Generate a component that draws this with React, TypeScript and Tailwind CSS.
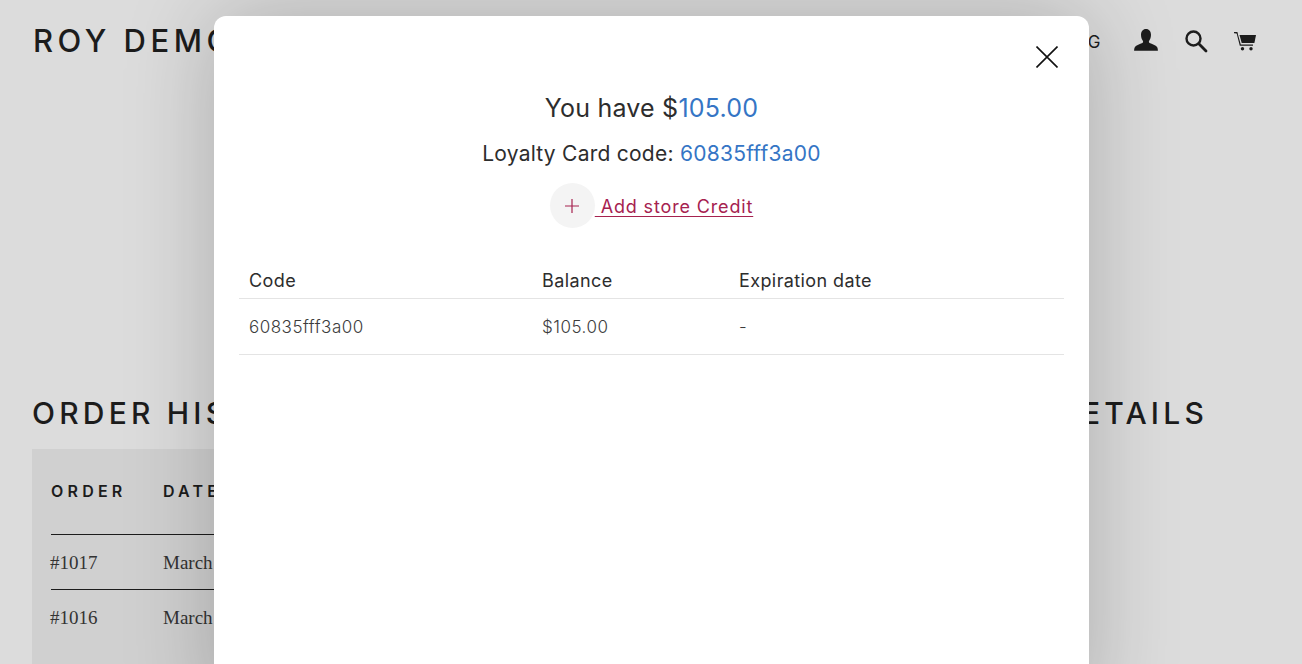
const sans = "font-['Inter','Noto_Sans',sans-serif]";

function UserIcon() {
  return (
    <svg width="26" height="26" viewBox="0 0 26 26" className="text-[#1c1c1c]" fill="currentColor">
      <path d="M13 1c3.200 0 5 2.600 5 5.800 0 2.400-.8 4.600-1.800 6-.5.8-.4 1.700.4 2.100 2.400 1.200 6.200 2 7.500 4.100.6 1 .8 2.300.8 3.800H1.100c0-1.500.2-2.800.8-3.800 1.300-2.100 5.100-2.900 7.500-4.100.8-.4.9-1.300.4-2.100-1-1.400-1.800-3.600-1.800-6C8 3.600 9.800 1 13 1z" />
    </svg>
  );
}

function SearchIcon() {
  return (
    <svg width="24" height="24" viewBox="0 0 24 24" fill="none" stroke="#1c1c1c">
      <circle cx="9.500" cy="9.500" r="7" strokeWidth="2.400" />
      <path d="M14.800 14.800L22 22" strokeWidth="2.800" strokeLinecap="round" />
    </svg>
  );
}

function CartIcon() {
  return (
    <svg width="24" height="22" viewBox="0 0 24 22" fill="#1c1c1c">
      <path d="M1 2h3.200l.6 1.500L3.800 3.400 1 3.200z" />
      <path d="M3.400 2.500l1 .1L7.800 14.500H20v1.200H6.800z" />
      <path d="M6.500 5h16.500l-1.600 8H8.700z" />
      <circle cx="9.500" cy="18.800" r="1.700" />
      <circle cx="18" cy="18.800" r="1.700" />
    </svg>
  );
}

function Page() {
  return (
    <div className="flex h-[664px] flex-col overflow-hidden bg-[#dcdcdc] text-[#1c1c1c]">
      <header className="flex h-[82px] items-start justify-between pl-[33px] pr-[45px]">
        <div className={`${sans} mt-[22px] text-[31px] leading-[38px] font-medium tracking-[4.500px] whitespace-nowrap`}>ROY DEMO STORE</div>
        <nav className="mt-[27px] flex items-center">
          <span className={`${sans} mr-[31px] mt-[3px] text-[17px] tracking-[1.500px]`}>CATALOG</span>
          <span className="mr-[25px]"><UserIcon /></span>
          <span className="mr-[25px]"><SearchIcon /></span>
          <span><CartIcon /></span>
        </nav>
      </header>
      <main className="mt-[335px] flex justify-between pl-[32px] pr-[94px]">
        <section className="w-[700px]">
          <h2 className={`${sans} text-[30px] leading-[36px] font-medium tracking-[4.200px]`}>ORDER HISTORY</h2>
          <div className="mt-[18px] h-[300px] bg-[#d0d0d0] pl-[19px] pr-[19px]">
            <div className={`${sans} flex h-[86px] items-start border-b border-[#1c1c1c] pt-[33px] text-[16px] leading-[18px] font-semibold tracking-[4.200px]`}>
              <span className="w-[112px]">ORDER</span>
              <span>DATE</span>
            </div>
            {["#1017", "#1016"].map((order) => (
              <div key={order} className="flex h-[55px] items-center border-b border-[#1c1c1c] pt-[2px] font-['Liberation_Serif',serif] text-[19px] text-[#333333] last:border-b-0">
                <span className="-ml-px w-[113px]">{order}</span>
                <span>March 9, 2021</span>
              </div>
            ))}
          </div>
        </section>
        <h2 className={`${sans} text-[30px] leading-[36px] font-medium tracking-[4.200px] whitespace-nowrap`}>ACCOUNT DETAILS</h2>
      </main>
    </div>
  );
}

function Modal() {
  return (
    <div className="absolute top-[16px] left-[214px] h-[700px] w-[875px] rounded-[12px] bg-white px-[25px] shadow-[0_0_90px_rgba(0,0,0,0.22)]">
      <button className="absolute top-[30px] right-[31px]" aria-label="Close">
        <svg width="22" height="22" viewBox="0 0 22 22" stroke="#111" strokeWidth="1.600" fill="none" className="block">
          <path d="M0.500 0.500L21.500 21.500M21.500 0.500L0.500 21.500" />
        </svg>
      </button>
      <div className={`${sans} text-[#2d2d2d]`}>
        <p className="pt-[76px] text-center text-[25px] leading-[32px] tracking-[0.200px]">
          You have $<span className="text-[#3575c5]">105.00</span>
        </p>
        <p className="mt-[15px] text-center text-[21px] leading-[29px] tracking-[0.250px]">
          Loyalty Card code: <span className="text-[#3575c5]">60835fff3a00</span>
        </p>
        <div className="mt-[15px] flex justify-center">
          <a className="flex items-center text-[18px] tracking-[0.850px] text-[#a6224f] underline decoration-1 underline-offset-[3px]">
            <span className="flex h-[45px] w-[45px] items-center justify-center rounded-full bg-[#f4f4f4] text-[#a6224f]">
              <svg width="14" height="14" viewBox="0 0 14 14" stroke="currentColor" strokeWidth="1.200"><path d="M7 0v14M0 7h14" /></svg>
            </span>
            <span className="pt-[1px]">&nbsp;Add store Credit</span>
          </a>
        </div>
        <div className="mt-[35px]">
          <div className="flex h-[36px] items-center border-b border-[#e4e4e4] text-[18px] tracking-[0.400px]">
            <span className="w-[303px] pl-[10px]">Code</span>
            <span className="w-[197px]">Balance</span>
            <span>Expiration date</span>
          </div>
          <div className="flex h-[56px] items-center border-b border-[#e4e4e4] pt-[2px] text-[17px] font-light tracking-[0.500px] text-[#3c3c3c]">
            <span className="w-[303px] pl-[10px]">60835fff3a00</span>
            <span className="w-[197px]">$105.00</span>
            <span>-</span>
          </div>
        </div>
      </div>
    </div>
  );
}

export default function App() {
  return (
    <div className="relative h-[664px] w-full overflow-hidden">
      <Page />
      <Modal />
    </div>
  );
}
